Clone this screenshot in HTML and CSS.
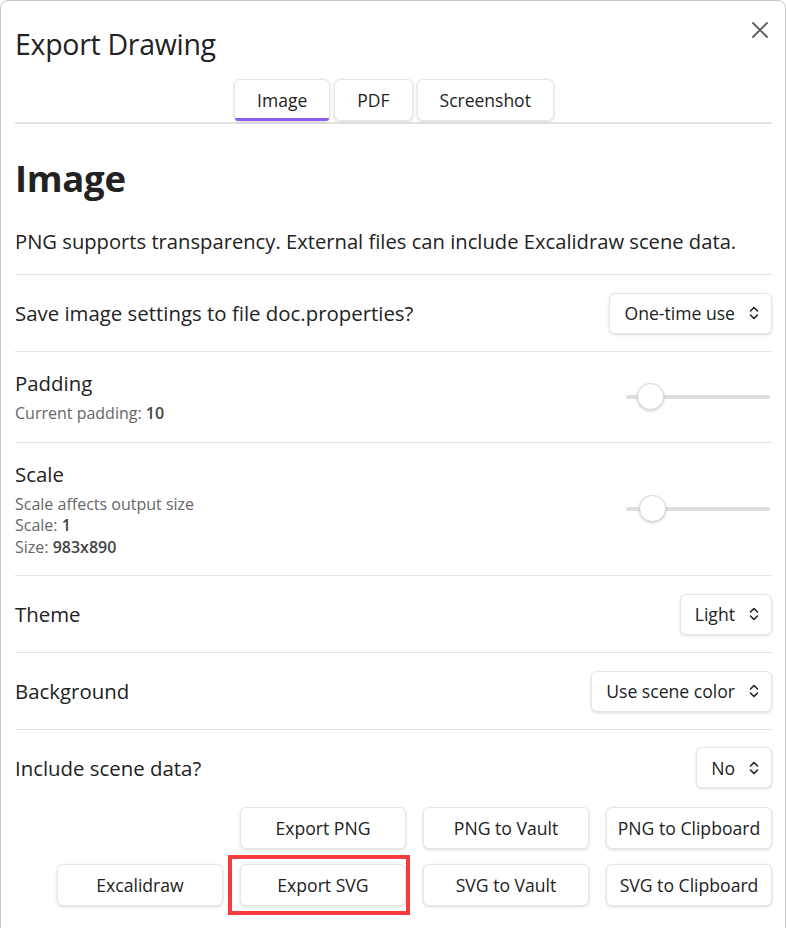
FILE: index.html
```html
<!DOCTYPE html>
<html>
<head>
<meta charset="utf-8">
<link rel="stylesheet" href="styles.css">
</head>
<body>
<div class="modal">
  <button class="close" aria-label="Close">
    <svg width="18" height="18" viewBox="0 0 18 18"><path d="M2 2 L16 16 M16 2 L2 16" stroke="#5c5c5c" stroke-width="1.8" stroke-linecap="round" fill="none"/></svg>
  </button>
  <div class="title-bar"><div class="title">Export Drawing</div></div>
  <div class="tabs">
    <button class="tab active">Image</button>
    <button class="tab">PDF</button>
    <button class="tab">Screenshot</button>
  </div>
  <h1 class="heading">Image</h1>
  <p class="desc">PNG supports transparency. External files can include Excalidraw scene data.</p>

  <div class="setting">
    <div class="info"><div class="name">Save image settings to file doc.properties?</div></div>
    <div class="select">One-time use<svg class="chev" width="10" height="16" viewBox="0 0 10 16"><path d="M1.5 6 L5 2.5 L8.5 6 M1.5 10 L5 13.5 L8.5 10" stroke="#222" stroke-width="1.6" fill="none" stroke-linecap="round" stroke-linejoin="round"/></svg></div>
  </div>

  <div class="setting">
    <div class="info">
      <div class="name">Padding</div>
      <div class="sub">Current padding: <b>10</b></div>
    </div>
    <div class="slider"><div class="thumb t1"></div></div>
  </div>

  <div class="setting">
    <div class="info">
      <div class="name">Scale</div>
      <div class="sub">Scale affects output size<br>Scale: <b>1</b><br>Size: <b>983x890</b></div>
    </div>
    <div class="slider"><div class="thumb t2"></div></div>
  </div>

  <div class="setting">
    <div class="info"><div class="name">Theme</div></div>
    <div class="select">Light<svg class="chev" width="10" height="16" viewBox="0 0 10 16"><path d="M1.5 6 L5 2.5 L8.5 6 M1.5 10 L5 13.5 L8.5 10" stroke="#222" stroke-width="1.6" fill="none" stroke-linecap="round" stroke-linejoin="round"/></svg></div>
  </div>

  <div class="setting">
    <div class="info"><div class="name">Background</div></div>
    <div class="select">Use scene color<svg class="chev" width="10" height="16" viewBox="0 0 10 16"><path d="M1.5 6 L5 2.5 L8.5 6 M1.5 10 L5 13.5 L8.5 10" stroke="#222" stroke-width="1.6" fill="none" stroke-linecap="round" stroke-linejoin="round"/></svg></div>
  </div>

  <div class="setting last">
    <div class="info"><div class="name">Include scene data?</div></div>
    <div class="select">No<svg class="chev" width="10" height="16" viewBox="0 0 10 16"><path d="M1.5 6 L5 2.5 L8.5 6 M1.5 10 L5 13.5 L8.5 10" stroke="#222" stroke-width="1.6" fill="none" stroke-linecap="round" stroke-linejoin="round"/></svg></div>
  </div>

  <div class="actions">
    <div class="btn-row">
      <button class="btn">Export PNG</button>
      <button class="btn">PNG to Vault</button>
      <button class="btn">PNG to Clipboard</button>
    </div>
    <div class="btn-row">
      <button class="btn">Excalidraw</button>
      <button class="btn highlight">Export SVG</button>
      <button class="btn">SVG to Vault</button>
      <button class="btn">SVG to Clipboard</button>
    </div>
  </div>
</div>
</body>
</html>
```

FILE: styles.css
```css
* { box-sizing: border-box; }
html, body { margin: 0; padding: 0; background: #fff; }
body {
  font-family: "Open Sans", "Noto Sans", sans-serif;
  color: #222;
  width: 786px;
  height: 928px;
  overflow: hidden;
}
.modal {
  position: relative;
  width: 786px;
  height: 940px;
  border: 1px solid #c8c8c8;
  border-radius: 8px 8px 0 0;
  padding: 0 13px 0 14px;
  background: #fff;
}
.close {
  position: absolute;
  top: 19px;
  right: 15px;
  width: 20px;
  height: 20px;
  border: 0;
  background: none;
  padding: 1px;
  display: flex;
  align-items: center;
  justify-content: center;
}
.title-bar { padding-top: 25px; height: 78px; }
.title {
  font-size: 28.5px;
  line-height: 36px;
  font-weight: 400;
  letter-spacing: -0.3px;
  color: #222;
}
.tabs {
  display: flex;
  justify-content: center;
  gap: 4px;
  border-bottom: 2px solid #e3e3e3;
  padding-left: 1px;
}
.tab {
  font-family: inherit;
  font-size: 17.5px;
  color: #222;
  height: 42px;
  background: #fff;
  border: 1px solid #e6e6e6;
  border-radius: 6px;
  box-shadow: 0 1px 3px rgba(0,0,0,0.15);
  padding: 0 22px;
  position: relative;
  margin-bottom: 1px;
}
.tab.active::after {
  content: "";
  position: absolute;
  left: 0; right: 0; bottom: -1px;
  height: 3px;
  border-radius: 0 0 6px 6px;
  background: #8b5cf6;
}
.heading {
  margin: 30px 0 0 0;
  font-size: 36.5px;
  line-height: 48px;
  font-weight: 700;
  letter-spacing: -0.3px;
}
.desc {
  margin: 25px 0 19px 0;
  font-size: 20.2px;
  line-height: 28px;
  letter-spacing: 0;
}
.setting {
  display: flex;
  align-items: center;
  justify-content: space-between;
  border-top: 1px solid #e3e3e3;
  padding: 17px 0 17px 0;
  min-height: 77px;
}
.setting.last { padding-bottom: 0; min-height: 59px; }
.name {
  font-size: 20.4px;
  line-height: 28px;
}
.sub {
  margin-top: 6px;
  font-size: 16px;
  line-height: 21.5px;
  color: #666;
}
.sub b { color: #444; font-weight: 600; }
.select {
  display: flex;
  align-items: center;
  gap: 14px;
  height: 41px;
  padding: 0 12px 0 14px;
  font-size: 17.6px;
  color: #222;
  background: #fff;
  border: 1px solid #e6e6e6;
  border-radius: 6px;
  box-shadow: 0 1px 3px rgba(0,0,0,0.15);
}
.chev { flex: none; }
.slider {
  position: relative;
  width: 144px;
  height: 4px;
  border-radius: 2px;
  background: #dedede;
  margin-right: 2px;
}
.thumb {
  position: absolute;
  top: -12px;
  width: 27px;
  height: 27px;
  border-radius: 50%;
  background: #fff;
  border: 1px solid #d8d8d8;
  box-shadow: 0 1px 3px rgba(0,0,0,0.2);
}
.t1 { left: 11px; }
.t2 { left: 13px; }
.actions {
  display: flex;
  flex-direction: column;
  gap: 15px;
  margin-top: 19px;
}
.btn-row {
  display: flex;
  justify-content: flex-end;
  gap: 17px;
}
.btn {
  position: relative;
  font-family: inherit;
  width: 166px;
  height: 42px;
  font-size: 17.6px;
  color: #222;
  background: #fff;
  border: 1px solid #e6e6e6;
  border-radius: 6px;
  box-shadow: 0 1px 3px rgba(0,0,0,0.15);
  padding: 0;
}
.btn.highlight::after {
  content: "";
  position: absolute;
  left: -13px; right: -5px; top: -10px; bottom: -10px;
  border: 4px solid #f53b3b;
}
```
